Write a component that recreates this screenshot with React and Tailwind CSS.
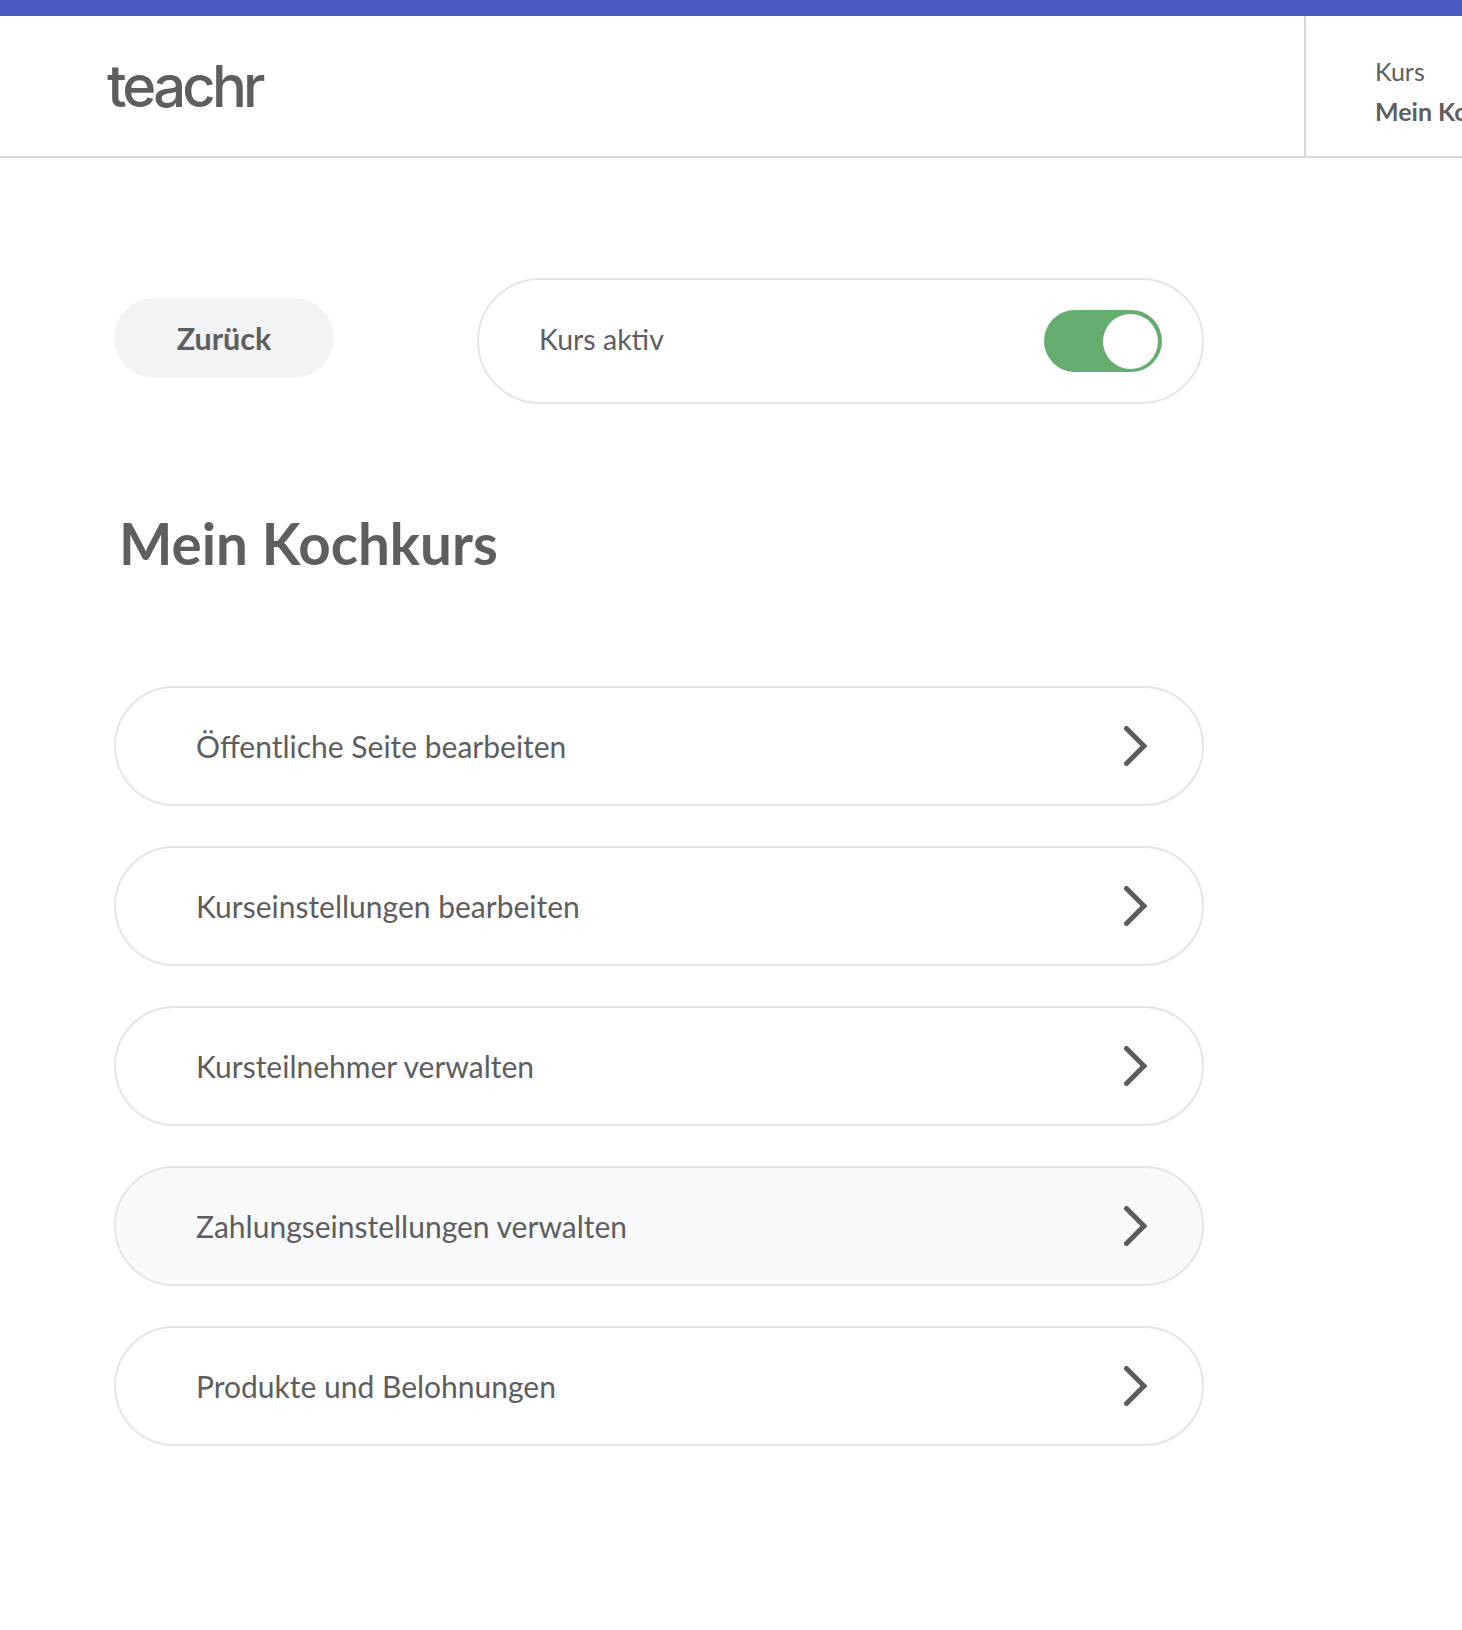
import React from 'react';

const rows = [
  { label: 'Öffentliche Seite bearbeiten' },
  { label: 'Kurseinstellungen bearbeiten' },
  { label: 'Kursteilnehmer verwalten' },
  { label: 'Zahlungseinstellungen verwalten', active: true },
  { label: 'Produkte und Belohnungen' },
];

const Chevron = () => (
  <svg width="24" height="40" viewBox="0 0 24 40" fill="none" stroke="#5c5c5c" strokeWidth="5" strokeLinecap="round" strokeLinejoin="miter">
    <path d="M2.5 2.5 L20 20 L2.5 37.5" />
  </svg>
);

const App = () => {
  return (
    <div className="w-[1462px] h-[1630px] overflow-hidden bg-white text-[#5e5e5e] font-['Lato','Noto_Sans',sans-serif]">
      <div className="h-4 bg-[#4859c1]" />

      {/* header */}
      <header className="flex h-[142px] border-b-2 border-[#d8d8d8]">
        <div className="w-[1306px] shrink-0 border-r-2 border-[#d8d8d8] pl-[107px] pt-[35px]">
          <span className="text-[58px] leading-[70px] font-medium tracking-[-3.8px] font-['Inter',sans-serif]">teachr</span>
        </div>
        <div className="pl-[69px] pt-[35px] whitespace-nowrap">
          <p className="text-[25px] leading-[40px]">Kurs</p>
          <p className="text-[25px] leading-[40px] font-bold">Mein Kochkurs</p>
        </div>
      </header>

      <main className="w-[1090px] ml-[114px] pt-[120px]">
        <div className="flex items-start">
          <button className="mt-[20px] w-[220px] h-[80px] pt-[2px] rounded-[40px] bg-[#f3f4f6] text-[30.5px] font-bold">Zurück</button>
          <div className="ml-[143px] w-[727px] h-[126px] rounded-[63px] border-2 border-[#e5e5e5] flex items-center justify-between pl-[60px] pr-[40px]">
            <span className="text-[28.5px] pb-[4px]">Kurs aktiv</span>
            <div className="w-[118px] h-[62px] rounded-full bg-[#65ad6e] flex items-center justify-end pr-1">
              <div className="w-[55px] h-[55px] rounded-full bg-white" />
            </div>
          </div>
        </div>

        <h1 className="mt-[104px] ml-[5px] text-[56.5px] leading-[70px] font-bold">Mein Kochkurs</h1>

        <div className="mt-[108px] flex flex-col gap-[40px]">
          {rows.map(row => (
            <div
              key={row.label}
              className={`h-[120px] rounded-[60px] border-2 border-[#e5e5e5] flex items-center justify-between pl-[80px] pr-[54px] ${row.active ? 'bg-[#f9fafc]' : 'bg-white'}`}
            >
              <span className="text-[30px]">{row.label}</span>
              <Chevron />
            </div>
          ))}
        </div>
      </main>
    </div>
  );
};

export default App;
